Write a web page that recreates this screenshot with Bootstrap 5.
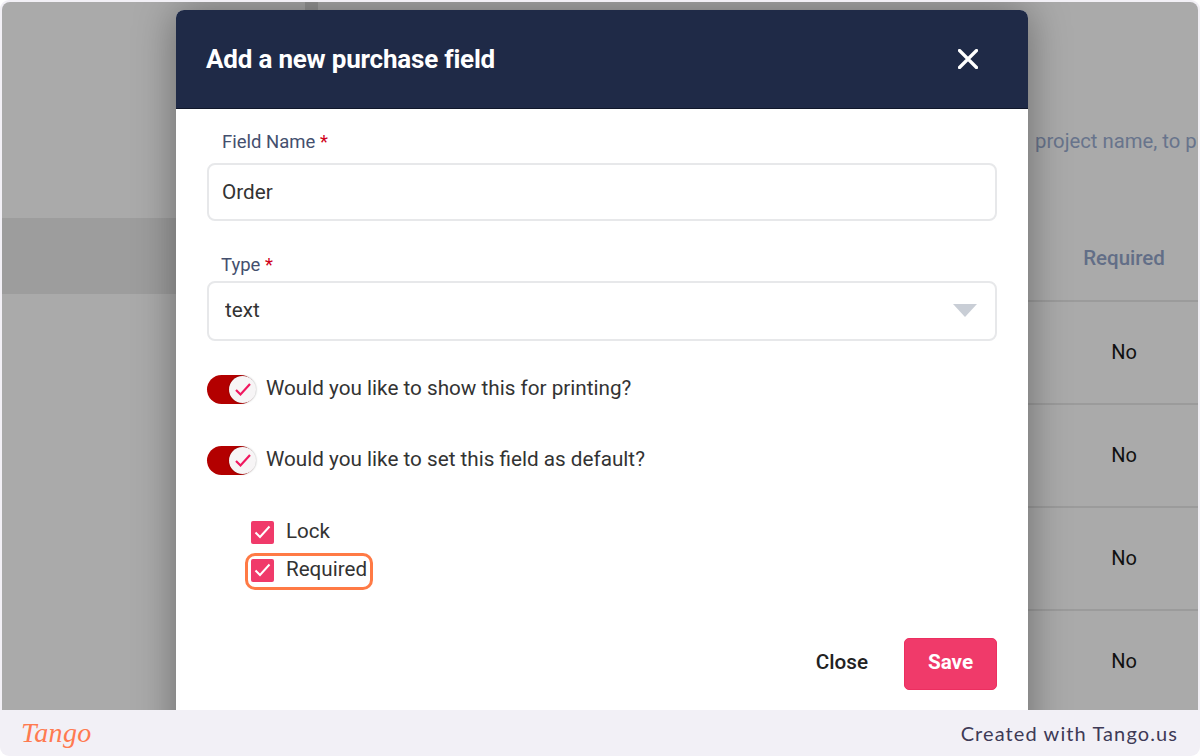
<!DOCTYPE html>
<html lang="en">
<head>
  <meta charset="UTF-8" />
  <meta name="viewport" content="width=device-width, initial-scale=1.0" />
  <title>Add a new purchase field</title>
  <link href="https://cdn.jsdelivr.net/npm/bootstrap@5.3.2/dist/css/bootstrap.min.css" rel="stylesheet">
  <style>
    html, body { height: 100%; }
    body {
      background: #fff;
      font-family: Roboto, "Liberation Sans", sans-serif;
      overflow: hidden;
    }
    .shot-frame {
      width: 1200px;
      height: 756px;
      padding: 2px 2px 0;
      background: #f2f0f6;
      border-radius: 9px;
      overflow: hidden;
    }
    .shot-stage {
      height: 708px;
      background: #aaa;
      border-radius: 8px 8px 0 0;
      overflow: hidden;
    }
    .bg-left { width: 320px; }
    .bg-chip { width: 13px; height: 8px; margin-left: 303px; background: #969696; }
    .bg-band { height: 76px; margin-top: 208px; background: #9d9d9d; }
    .bg-right { width: 248px; color: #111; }
    .bg-hint {
      height: 216px;
      padding: 127px 0 0 85px;
      font-size: 20.3px;
      line-height: 24px;
      white-space: nowrap;
      color: #68748c;
    }
    .bg-head, .bg-row { padding-left: 100px; text-align: center; border-bottom: 2px solid #9b9b9b; }
    .bg-head { height: 84px; padding-top: 25px; font-size: 20.5px; font-weight: 500; color: #626e87; }
    .bg-row { height: 103px; padding-top: 35px; font-size: 20px; }

    .modal-sheet {
      position: absolute;
      top: 8px;
      left: 174px;
      width: 852px;
      height: 760px;
      background: #fff;
      border: 0;
      border-radius: 8px 8px 0 0;
      box-shadow: 0 0 42px rgba(0, 0, 0, .38);
    }
    .sheet-head {
      height: 99px;
      padding: 0 50px 0 30px;
      background: #1f2a47;
      border-radius: 8px 8px 0 0;
      border-bottom: 1px solid #10172a;
      color: #fff;
    }
    .sheet-title { font-size: 26px; font-weight: 700; letter-spacing: -.2px; line-height: 1; margin: 0; }
    .sheet-close { background: none; border: 0; padding: 0; line-height: 0; }
    .sheet-body { padding: 20px 31px 0; }
    .field-label { font-size: 18.5px; line-height: 24px; margin: 1px 0 9px 15px; color: #444f6e; }
    .field-label.type-label { margin: 32px 0 4px 14px; }
    .req-star { color: #d0021b; }
    .field-input {
      height: 58px;
      padding: 0 13px;
      font-size: 20.7px;
      color: #333;
      border: 2px solid #e7e8ea;
      border-radius: 8px;
    }
    .field-select {
      height: 60px;
      padding: 0 16px;
      font-size: 20.7px;
      color: #333;
      border: 2px solid #e7e8ea;
      border-radius: 8px;
      background-image: none;
    }
    .select-caret {
      position: absolute;
      top: 23px;
      right: 20px;
      width: 0;
      height: 0;
      border-left: 12px solid transparent;
      border-right: 12px solid transparent;
      border-top: 13px solid #c9ced6;
      pointer-events: none;
    }
    .toggle-row { height: 30px; margin-top: 33px; font-size: 20.7px; line-height: 28px; color: #333; }
    .toggle-row.second { margin-top: 41px; }
    .toggle-track {
      width: 48px;
      height: 29px;
      padding: 1px 0 0 22px;
      margin-right: 11px;
      background: #b30000;
      border-radius: 15px;
      line-height: 0;
      flex: none;
    }
    .toggle-thumb {
      width: 27px;
      height: 27px;
      background: #f7f5f6;
      border-radius: 50%;
      box-shadow: 0 0 2px rgba(0, 0, 0, .35);
    }
    .toggle-text { margin-top: -3px; }
    .check-list { margin: 45px 0 0 44px; }
    .check-row { height: 24px; font-size: 20.6px; line-height: 24px; color: #333; gap: 12px; }
    .check-row + .check-row { margin-top: 14px; }
    .check-text { margin-top: -3px; }
    .check-box {
      width: 23px;
      height: 23px;
      background: #f03a6a;
      border-radius: 2px;
      line-height: 0;
      flex: none;
    }
    .step-outline {
      position: absolute;
      top: -5px;
      left: -6px;
      width: 128px;
      height: 37px;
      border: 3px solid #ff7a45;
      border-radius: 10px;
      pointer-events: none;
    }
    .sheet-foot { margin-top: 56px; gap: 36px; }
    .btn-dismiss { padding: 0 0 3px; background: none; border: 0; font-size: 20.7px; font-weight: 500; color: #222; }
    .btn-save {
      width: 93px;
      height: 52px;
      padding: 0 0 2px;
      background: #f03a6a;
      border: 1px solid #ec2f60;
      border-radius: 5px;
      font-size: 20.7px;
      font-weight: 700;
      color: #fff;
    }
    .tango-bar { height: 46px; padding: 0 20px 0 19px; }
    .tango-logo {
      font-family: "Liberation Serif", serif;
      font-style: italic;
      font-size: 28px;
      line-height: 1;
      letter-spacing: .3px;
      color: #ff7a50;
    }
    .tango-credit { font-family: Lato, sans-serif; font-size: 20px; letter-spacing: 1.1px; color: #3e3a56; }
  </style>
</head>
<body>
  <div class="shot-frame">
    <div class="shot-stage position-relative d-flex justify-content-between">
      <div class="bg-left">
        <div class="bg-chip"></div>
        <div class="bg-band"></div>
      </div>
      <div class="bg-right">
        <div class="bg-hint">project name, to print on the order</div>
        <div class="bg-head">Required</div>
        <div class="bg-row">No</div>
        <div class="bg-row">No</div>
        <div class="bg-row">No</div>
        <div class="bg-row">No</div>
      </div>

      <div class="modal-content modal-sheet">
        <div class="sheet-head d-flex align-items-center justify-content-between">
          <h5 class="sheet-title">Add a new purchase field</h5>
          <button type="button" class="sheet-close" aria-label="Close">
            <svg width="20" height="20" viewBox="0 0 20 20"><path d="M1.5 1.5 18.5 18.5M18.5 1.5 1.5 18.5" stroke="#fff" stroke-width="3.2" stroke-linecap="round"/></svg>
          </button>
        </div>
        <div class="sheet-body">
          <label class="field-label d-block" for="fieldName">Field Name <span class="req-star">*</span></label>
          <input type="text" class="form-control field-input" id="fieldName" value="Order">

          <label class="field-label type-label d-block" for="fieldType">Type <span class="req-star">*</span></label>
          <div class="position-relative">
            <select class="form-select field-select" id="fieldType">
              <option>text</option>
            </select>
            <span class="select-caret"></span>
          </div>

          <div class="toggle-row d-flex align-items-center">
            <span class="toggle-track"><span class="toggle-thumb d-inline-flex align-items-center justify-content-center">
              <svg width="18" height="15" viewBox="0 0 18 15"><path d="M2 8 6.5 12.5 16 2" fill="none" stroke="#f0175f" stroke-width="2.2"/></svg>
            </span></span>
            <span class="toggle-text">Would you like to show this for printing?</span>
          </div>
          <div class="toggle-row second d-flex align-items-center">
            <span class="toggle-track"><span class="toggle-thumb d-inline-flex align-items-center justify-content-center">
              <svg width="18" height="15" viewBox="0 0 18 15"><path d="M2 8 6.5 12.5 16 2" fill="none" stroke="#f0175f" stroke-width="2.2"/></svg>
            </span></span>
            <span class="toggle-text">Would you like to set this field as default?</span>
          </div>

          <div class="check-list">
            <div class="check-row d-flex align-items-center">
              <span class="check-box d-inline-flex align-items-center justify-content-center">
                <svg width="17" height="14" viewBox="0 0 17 14"><path d="M1.5 7.5 6 12 15.5 1.5" fill="none" stroke="#fff" stroke-width="2"/></svg>
              </span>
              <span class="check-text">Lock</span>
            </div>
            <div class="check-row d-flex align-items-center position-relative">
              <span class="check-box d-inline-flex align-items-center justify-content-center">
                <svg width="17" height="14" viewBox="0 0 17 14"><path d="M1.5 7.5 6 12 15.5 1.5" fill="none" stroke="#fff" stroke-width="2"/></svg>
              </span>
              <span class="check-text">Required</span>
              <span class="step-outline"></span>
            </div>
          </div>

          <div class="sheet-foot d-flex justify-content-end align-items-center">
            <button type="button" class="btn btn-dismiss">Close</button>
            <button type="button" class="btn btn-save">Save</button>
          </div>
        </div>
      </div>
    </div>

    <div class="tango-bar d-flex align-items-center justify-content-between">
      <span class="tango-logo">Tango</span>
      <span class="tango-credit">Created with Tango.us</span>
    </div>
  </div>
  <script src="https://cdn.jsdelivr.net/npm/bootstrap@5.3.2/dist/js/bootstrap.bundle.min.js"></script>
</body>
</html>
